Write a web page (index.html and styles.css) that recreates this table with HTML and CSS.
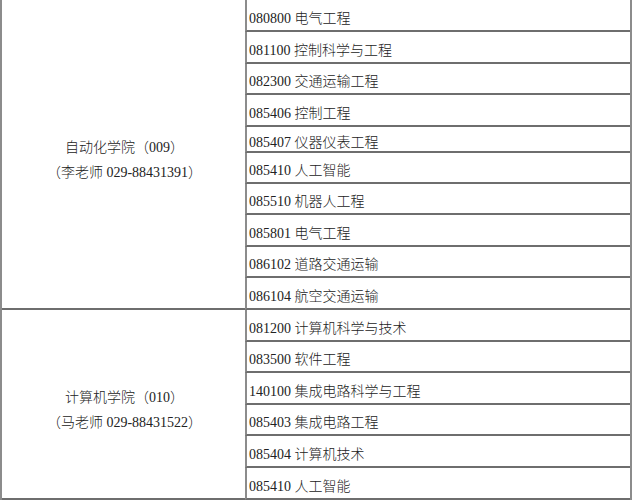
FILE: index.html
```html
<!DOCTYPE html>
<html lang="zh-CN">
<head>
<meta charset="utf-8">
<title>招生学院与专业</title>
<link rel="stylesheet" href="styles.css">
</head>
<body>
<div class="sheet">
  <div class="school school-a">
    <p class="school-name">自动化学院（009）</p>
    <p class="school-contact">（李老师 029-88431391）</p>
  </div>
  <div class="major">080800 电气工程</div>
  <div class="major">081100 控制科学与工程</div>
  <div class="major">082300 交通运输工程</div>
  <div class="major">085406 控制工程</div>
  <div class="major">085407 仪器仪表工程</div>
  <div class="major">085410 人工智能</div>
  <div class="major">085510 机器人工程</div>
  <div class="major">085801 电气工程</div>
  <div class="major">086102 道路交通运输</div>
  <div class="major">086104 航空交通运输</div>
  <div class="school school-b">
    <p class="school-name">计算机学院（010）</p>
    <p class="school-contact">（马老师 029-88431522）</p>
  </div>
  <div class="major">081200 计算机科学与技术</div>
  <div class="major">083500 软件工程</div>
  <div class="major">140100 集成电路科学与工程</div>
  <div class="major">085403 集成电路工程</div>
  <div class="major">085404 计算机技术</div>
  <div class="major">085410 人工智能</div>
</div>
</body>
</html>
```

FILE: styles.css
```css
html, body {
  margin: 0;
  padding: 0;
  background: #ffffff;
}

body {
  font-family: "Liberation Serif", "Noto Sans CJK SC", serif;
  font-size: 14px;
  font-weight: 300;
  color: #222222;
  width: 633px;
  height: 500px;
  overflow: hidden;
}

.sheet {
  display: grid;
  grid-template-columns: 243px 385px;
  grid-template-rows: 32px 32px 31px 32px 26px 31px 31px 32px 31px 32px 32px 31px 32px 31px 32px 32px;
  width: 628px;
  border-left: 2px solid #8c8c8c;
  border-right: 2px solid #8c8c8c;
}

.school {
  grid-column: 1;
  border-bottom: 2px solid #6e6e6e;
  display: flex;
  flex-direction: column;
  justify-content: center;
  align-items: center;
  gap: 7px;
  padding-top: 12px;
  padding-left: 2px;
}

.school-a {
  grid-row: 1 / span 10;
}

.school-b {
  grid-row: 11 / span 6;
}

.school p {
  margin: 0;
  line-height: 18px;
  white-space: nowrap;
}

.major {
  grid-column: 2;
  border-left: 2px solid #8c8c8c;
  border-bottom: 2px solid #6e6e6e;
  display: flex;
  align-items: center;
  padding-left: 2px;
  padding-top: 3px;
  white-space: nowrap;
}
```
